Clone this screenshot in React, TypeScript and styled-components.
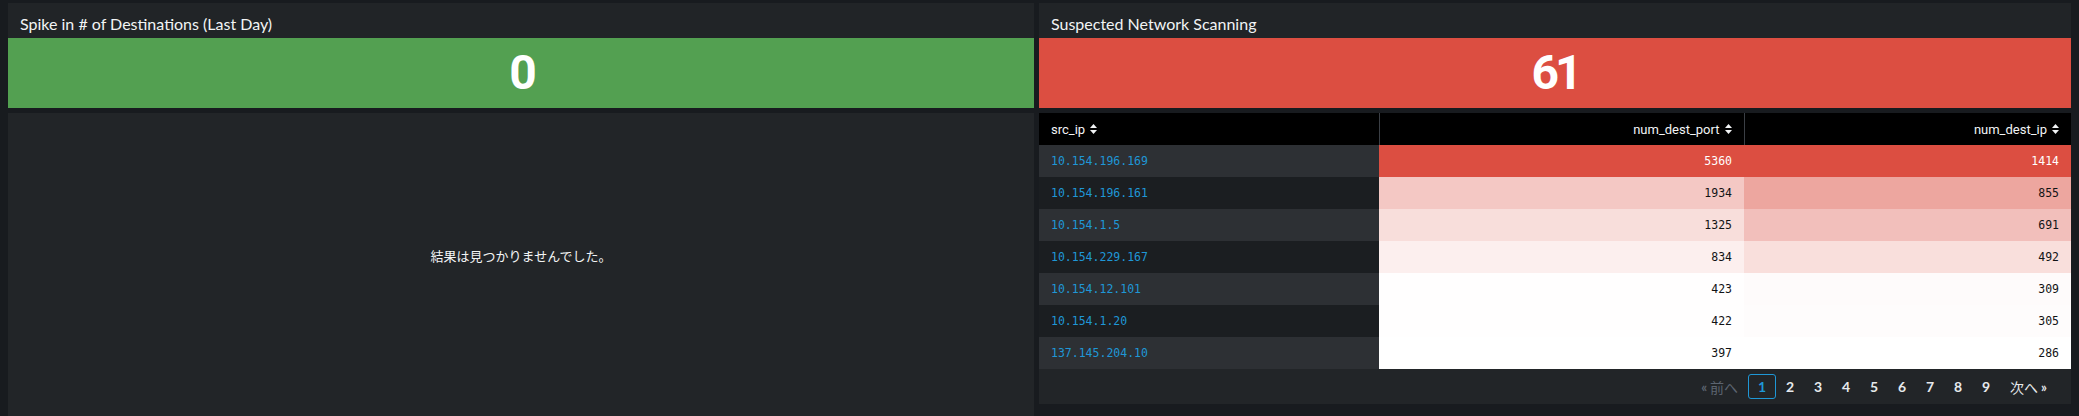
import React from "react";
import styled, { createGlobalStyle } from "styled-components";

const Global = createGlobalStyle`
  html, body { margin: 0; padding: 0; background: #181b1f; }
  body { font-family: Lato, "Noto Sans CJK JP", sans-serif; overflow: hidden; }
  #root { height: 416px; }
`;

const Dashboard = styled.div`
  display: grid;
  grid-template-columns: 1026px 1032px;
  column-gap: 5px;
  padding: 3px 8px 0 8px;
  height: 416px;
  box-sizing: border-box;
  align-items: start;
  overflow: hidden;
`;

const Panel = styled.section`
  display: flex;
  flex-direction: column;
  row-gap: 5px;
`;

const TopBlock = styled.div`
  display: flex;
  flex-direction: column;
  background: #212427;
`;

const Title = styled.h2`
  margin: 0;
  height: 35px;
  box-sizing: border-box;
  padding: 11px 12px 0 12px;
  font-size: 16px;
  line-height: 19px;
  font-weight: 400;
  color: #f2f4f5;
  white-space: nowrap;
`;

const SingleValue = styled.div<{ $color: string }>`
  height: 70px;
  display: flex;
  align-items: center;
  justify-content: center;
  background: ${(p) => p.$color};
  color: #ffffff;
  font-family: Roboto, sans-serif;
  font-weight: 700;
  font-size: 48px;
  line-height: 1;
  letter-spacing: -4px;
`;

const EmptyBody = styled.div`
  height: 310px;
  background: #222528;
  box-sizing: border-box;
  padding-top: 133px;
  text-align: center;
  color: #f2f4f5;
  font-family: "Noto Sans CJK JP", sans-serif;
  font-size: 13px;
  line-height: 20px;
`;

const TableBody = styled.div`
  background: #222528;
  display: flex;
  flex-direction: column;
`;

const Table = styled.table`
  width: 100%;
  border-collapse: collapse;
  table-layout: fixed;
`;

const HeadCell = styled.th<{ $align: "left" | "right"; $divider?: boolean }>`
  height: 32px;
  padding: 0 12px;
  background: #000000;
  color: #f2f4f5;
  font-family: Roboto, sans-serif;
  font-weight: 400;
  font-size: 13px;
  text-align: ${(p) => p.$align};
  border-left: ${(p) => (p.$divider ? "1px solid #3b3f45" : "none")};
  white-space: nowrap;
`;

const HeadInner = styled.span`
  display: inline-flex;
  align-items: center;
  gap: 5px;
`;

const Row = styled.tr<{ $odd: boolean }>`
  background: ${(p) => (p.$odd ? "#2d3034" : "#1b1e21")};
`;

const IpCell = styled.td`
  height: 32px;
  padding: 0 12px;
  font-family: "DejaVu Sans Mono", monospace;
  font-size: 11.5px;
  color: #1f97d6;
  white-space: nowrap;
`;

const HeatCell = styled.td<{ $bg: string; $light: boolean }>`
  height: 32px;
  padding: 0 12px;
  text-align: right;
  font-family: "DejaVu Sans Mono", monospace;
  font-size: 11.5px;
  background: ${(p) => p.$bg};
  color: ${(p) => (p.$light ? "#ffffff" : "#111315")};
`;

const Pager = styled.nav`
  height: 35px;
  display: flex;
  align-items: center;
  justify-content: flex-end;
  padding-right: 14px;
  font-family: Lato, "Noto Sans CJK JP", sans-serif;
  font-size: 14px;
`;

const PageStep = styled.span<{ $disabled?: boolean }>`
  height: 25px;
  padding: 0 10px;
  display: inline-flex;
  align-items: center;
  gap: 3px;
  color: ${(p) => (p.$disabled ? "#5c6470" : "#e6e9ec")};
  white-space: nowrap;
`;

const PageNum = styled.span<{ $active?: boolean }>`
  box-sizing: border-box;
  height: 25px;
  width: 28px;
  display: inline-flex;
  align-items: center;
  justify-content: center;
  border-radius: 3px;
  border: 1px solid ${(p) => (p.$active ? "#1f97d6" : "transparent")};
  color: ${(p) => (p.$active ? "#1f97d6" : "#e6e9ec")};
  font-weight: 700;
`;

const Arrow = styled.span`
  font-size: 13px;
  font-weight: 700;
`;

function SortIcon() {
  return (
    <svg width="7" height="10" viewBox="0 0 7 10">
      <path d="M3.5 0L7 4H0z M3.5 10L0 6h7z" fill="currentColor" />
    </svg>
  );
}

const RED = [220, 78, 65];
function heat(v: number, min: number, max: number) {
  const t = (v - min) / (max - min);
  const c = RED.map((x) => Math.round(255 - (255 - x) * t));
  return { bg: `rgb(${c.join(",")})`, light: t > 0.6 };
}

const rows = [
  { ip: "10.154.196.169", port: 5360, dest: 1414 },
  { ip: "10.154.196.161", port: 1934, dest: 855 },
  { ip: "10.154.1.5", port: 1325, dest: 691 },
  { ip: "10.154.229.167", port: 834, dest: 492 },
  { ip: "10.154.12.101", port: 423, dest: 309 },
  { ip: "10.154.1.20", port: 422, dest: 305 },
  { ip: "137.145.204.10", port: 397, dest: 286 },
];

export default function App() {
  const ports = rows.map((r) => r.port);
  const dests = rows.map((r) => r.dest);
  const pMin = Math.min(...ports), pMax = Math.max(...ports);
  const dMin = Math.min(...dests), dMax = Math.max(...dests);
  return (
    <>
      <Global />
      <Dashboard>
        <Panel>
          <TopBlock>
            <Title>Spike in # of Destinations (Last Day)</Title>
            <SingleValue $color="#53a051">0</SingleValue>
          </TopBlock>
          <EmptyBody>結果は見つかりませんでした。</EmptyBody>
        </Panel>
        <Panel>
          <TopBlock>
            <Title>Suspected Network Scanning</Title>
            <SingleValue $color="#dc4e41">61</SingleValue>
          </TopBlock>
          <TableBody>
            <Table>
              <colgroup>
                <col style={{ width: 340 }} />
                <col style={{ width: 365 }} />
                <col />
              </colgroup>
              <thead>
                <tr>
                  <HeadCell $align="left">
                    <HeadInner>src_ip <SortIcon /></HeadInner>
                  </HeadCell>
                  <HeadCell $align="right" $divider>
                    <HeadInner>num_dest_port <SortIcon /></HeadInner>
                  </HeadCell>
                  <HeadCell $align="right" $divider>
                    <HeadInner>num_dest_ip <SortIcon /></HeadInner>
                  </HeadCell>
                </tr>
              </thead>
              <tbody>
                {rows.map((r, i) => {
                  const hp = heat(r.port, pMin, pMax);
                  const hd = heat(r.dest, dMin, dMax);
                  return (
                    <Row key={r.ip} $odd={i % 2 === 0}>
                      <IpCell>{r.ip}</IpCell>
                      <HeatCell $bg={hp.bg} $light={hp.light}>{r.port}</HeatCell>
                      <HeatCell $bg={hd.bg} $light={hd.light}>{r.dest}</HeatCell>
                    </Row>
                  );
                })}
              </tbody>
            </Table>
            <Pager>
              <PageStep $disabled><Arrow>«</Arrow>前へ</PageStep>
              <PageNum $active>1</PageNum>
              {[2, 3, 4, 5, 6, 7, 8, 9].map((n) => (
                <PageNum key={n}>{n}</PageNum>
              ))}
              <PageStep>次へ<Arrow>»</Arrow></PageStep>
            </Pager>
          </TableBody>
        </Panel>
      </Dashboard>
    </>
  );
}
